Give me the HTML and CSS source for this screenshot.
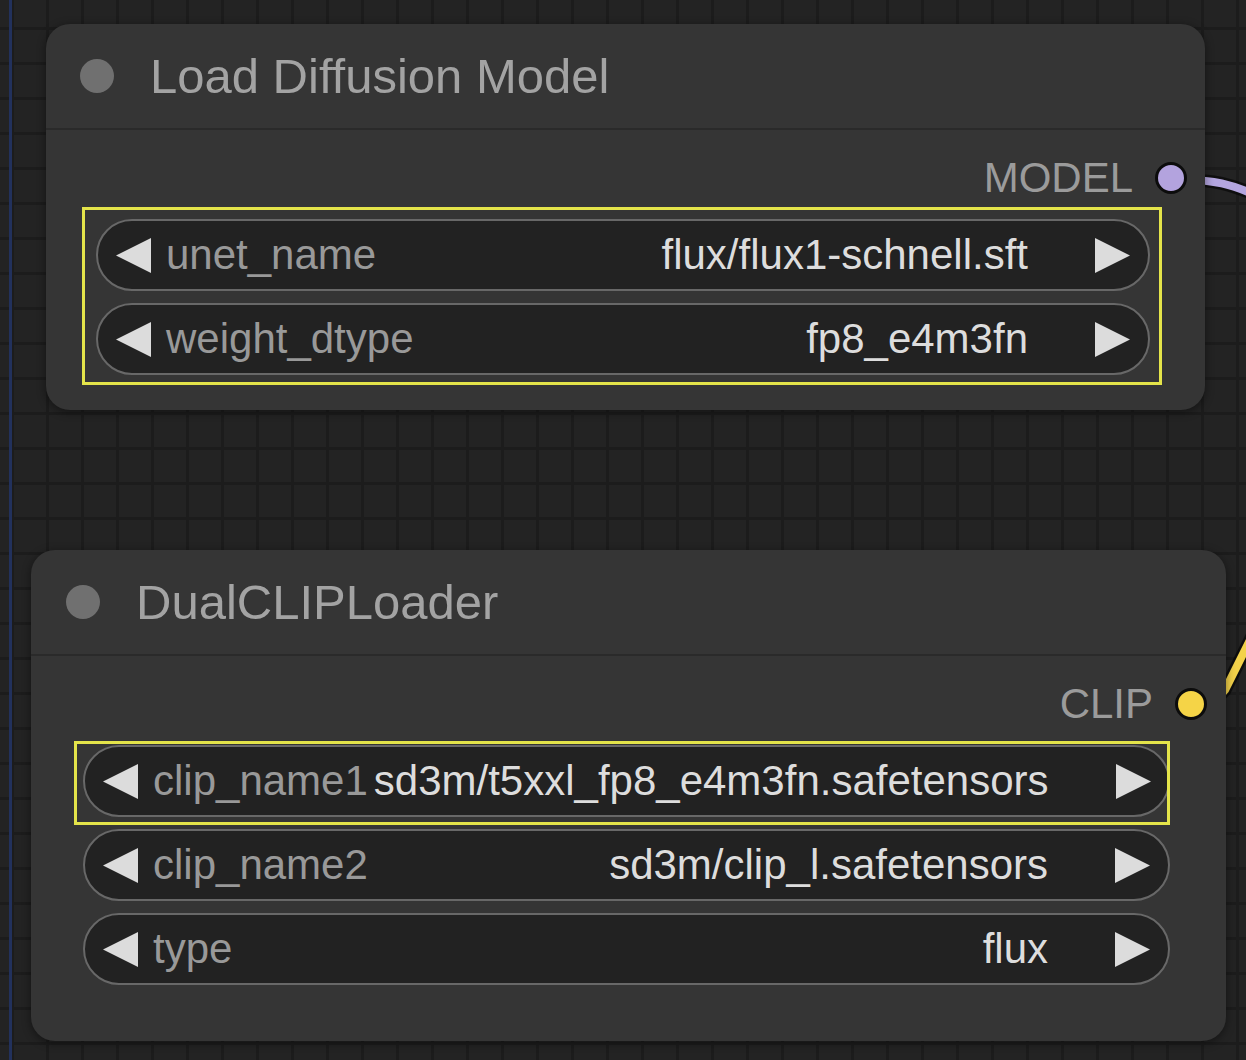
FILE: index.html
```html
<!DOCTYPE html>
<html>
<head>
<meta charset="utf-8">
<link rel="stylesheet" href="styles.css">
</head>
<body>
<div class="canvas">
  <div class="guide"></div>
  <svg class="wires" width="1246" height="1060" viewBox="0 0 1246 1060">
    <path d="M1180 180 C1212 179 1232 184 1262 198" stroke="rgba(0,0,0,0.55)" stroke-width="13" fill="none"/>
    <path d="M1180 180 C1212 179 1232 184 1262 198" stroke="#b4a6e0" stroke-width="8" fill="none"/>
    <path d="M1195 704 Q1214 704 1225 690 L1254 632" stroke="rgba(0,0,0,0.55)" stroke-width="13" fill="none"/>
    <path d="M1195 704 Q1214 704 1225 690 L1254 632" stroke="#f3d24a" stroke-width="8" fill="none"/>
  </svg>

  <div class="node n1">
    <div class="head">
      <span class="hdot"></span>
      <span class="title">Load Diffusion Model</span>
    </div>
    <div class="body">
      <div class="out"><span class="olabel">MODEL</span><span class="slot model"></span></div>
      <div class="widgets">
        <div class="pill">
          <svg class="arr" width="35" height="35" viewBox="0 0 35 35"><polygon points="35,0 35,35 0,17.5" fill="#dcdcdc"/></svg>
          <span class="lab">unet_name</span>
          <span class="val">flux/flux1-schnell.sft</span>
          <svg class="arr" width="35" height="35" viewBox="0 0 35 35"><polygon points="0,0 0,35 35,17.5" fill="#dcdcdc"/></svg>
        </div>
        <div class="pill">
          <svg class="arr" width="35" height="35" viewBox="0 0 35 35"><polygon points="35,0 35,35 0,17.5" fill="#dcdcdc"/></svg>
          <span class="lab">weight_dtype</span>
          <span class="val">fp8_e4m3fn</span>
          <svg class="arr" width="35" height="35" viewBox="0 0 35 35"><polygon points="0,0 0,35 35,17.5" fill="#dcdcdc"/></svg>
        </div>
      </div>
    </div>
    <div class="sel sel1"></div>
  </div>

  <div class="node n2">
    <div class="head">
      <span class="hdot"></span>
      <span class="title">DualCLIPLoader</span>
    </div>
    <div class="body">
      <div class="out"><span class="olabel">CLIP</span><span class="slot clip"></span></div>
      <div class="widgets">
        <div class="pill">
          <svg class="arr" width="35" height="35" viewBox="0 0 35 35"><polygon points="35,0 35,35 0,17.5" fill="#dcdcdc"/></svg>
          <span class="lab">clip_name1</span>
          <span class="val">sd3m/t5xxl_fp8_e4m3fn.safetensors</span>
          <svg class="arr" width="35" height="35" viewBox="0 0 35 35"><polygon points="0,0 0,35 35,17.5" fill="#dcdcdc"/></svg>
        </div>
        <div class="pill">
          <svg class="arr" width="35" height="35" viewBox="0 0 35 35"><polygon points="35,0 35,35 0,17.5" fill="#dcdcdc"/></svg>
          <span class="lab">clip_name2</span>
          <span class="val">sd3m/clip_l.safetensors</span>
          <svg class="arr" width="35" height="35" viewBox="0 0 35 35"><polygon points="0,0 0,35 35,17.5" fill="#dcdcdc"/></svg>
        </div>
        <div class="pill">
          <svg class="arr" width="35" height="35" viewBox="0 0 35 35"><polygon points="35,0 35,35 0,17.5" fill="#dcdcdc"/></svg>
          <span class="lab">type</span>
          <span class="val">flux</span>
          <svg class="arr" width="35" height="35" viewBox="0 0 35 35"><polygon points="0,0 0,35 35,17.5" fill="#dcdcdc"/></svg>
        </div>
      </div>
    </div>
    <div class="sel sel2"></div>
  </div>
</div>
</body>
</html>
```

FILE: styles.css
```css
html, body {
  margin: 0;
  padding: 0;
  background: #232323;
}

.canvas {
  position: relative;
  width: 1246px;
  height: 1060px;
  overflow: hidden;
  background-color: #232323;
  background-image:
    linear-gradient(to right, #1c1c1c 3px, transparent 3px),
    linear-gradient(to bottom, #1c1c1c 3px, transparent 3px);
  background-size: 35px 35px;
  background-position: 11px 27px;
  font-family: "Liberation Sans", Arial, sans-serif;
}

.guide {
  position: absolute;
  left: 9px;
  top: 0;
  width: 3px;
  height: 1060px;
  background: #22315c;
}

.wires {
  position: absolute;
  left: 0;
  top: 0;
}

.node {
  position: absolute;
  background: #353535;
  border-radius: 24px;
  box-shadow: 0 2px 10px rgba(0, 0, 0, 0.45);
  display: flex;
  flex-direction: column;
}

.n1 {
  left: 46px;
  top: 24px;
  width: 1159px;
  height: 386px;
}

.n2 {
  left: 31px;
  top: 550px;
  width: 1195px;
  height: 491px;
}

.head {
  height: 104px;
  display: flex;
  align-items: center;
  border-bottom: 2px solid #2a2a2a;
}

.hdot {
  width: 34px;
  height: 34px;
  border-radius: 50%;
  background: #707070;
  flex-shrink: 0;
}

.n1 .head { padding-left: 34px; }
.n2 .head { padding-left: 35px; }

.title {
  font-size: 49px;
  color: #a3a3a3;
  margin-left: 36px;
  line-height: 1;
}

.body {
  display: flex;
  flex-direction: column;
}

.out {
  margin-top: 13px;
  height: 70px;
  display: flex;
  align-items: center;
  justify-content: flex-end;
  padding-right: 18px;
}

.n2 .out { padding-right: 19px; }

.olabel {
  font-size: 42px;
  color: #9b9b9b;
  margin-right: 22px;
  line-height: 1;
}

.slot {
  width: 26px;
  height: 26px;
  border-radius: 50%;
  border: 3px solid #0c0c0c;
}

.model { background: #b3a3de; }
.clip { background: #f5d447; }

.widgets {
  margin-top: 6px;
  display: flex;
  flex-direction: column;
  gap: 12px;
}

.n1 .widgets { margin-left: 50px; margin-right: 55px; }
.n2 .widgets { margin-left: 52px; margin-right: 56px; }

.pill {
  height: 68px;
  border: 2px solid #686868;
  border-radius: 36px;
  background: #222222;
  display: flex;
  align-items: center;
  padding: 0 18px;
  font-size: 42px;
  line-height: 1;
  white-space: nowrap;
}

.arr {
  flex-shrink: 0;
  display: block;
}

.lab {
  color: #999999;
  margin-left: 15px;
  flex-shrink: 0;
}

.val {
  color: #dddddd;
  margin-left: auto;
  margin-right: 67px;
  padding-left: 6px;
}

.sel {
  position: absolute;
  border: 3px solid #e4e44a;
  pointer-events: none;
}

.sel1 {
  left: 36px;
  top: 183px;
  width: 1074px;
  height: 172px;
}

.sel2 {
  left: 43px;
  top: 191px;
  width: 1090px;
  height: 78px;
}
```
